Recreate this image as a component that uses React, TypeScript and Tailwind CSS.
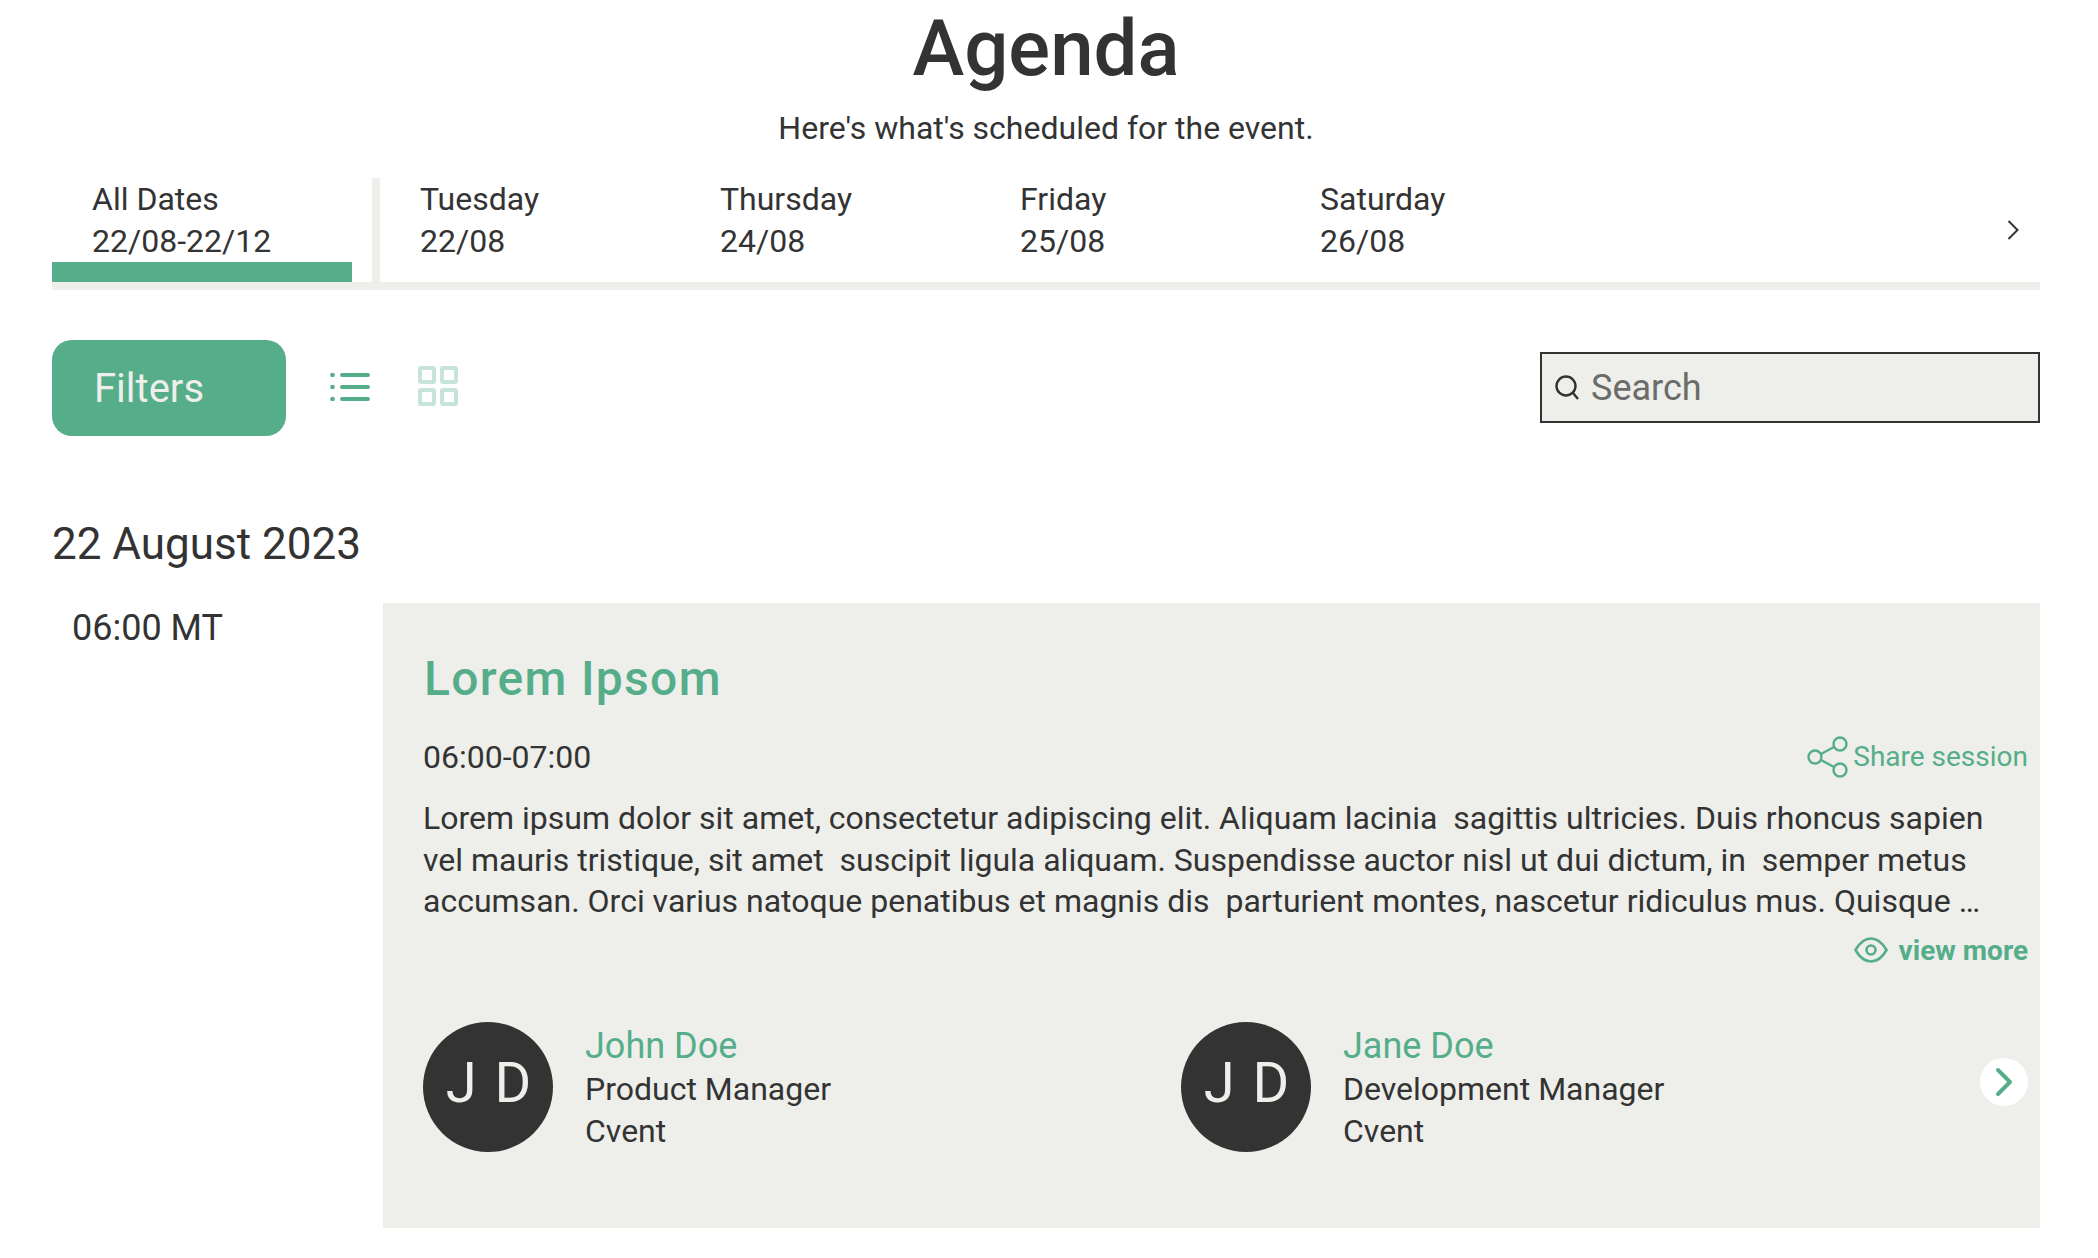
import React from 'react'
import { ChevronRight } from 'lucide-react'

const tabs = [
  { day: 'Tuesday', date: '22/08' },
  { day: 'Thursday', date: '24/08' },
  { day: 'Friday', date: '25/08' },
  { day: 'Saturday', date: '26/08' },
]

const speakers = [
  { name: 'John Doe', role: 'Product Manager', company: 'Cvent', width: 'w-[758px]' },
  { name: 'Jane Doe', role: 'Development Manager', company: 'Cvent', width: 'flex-1' },
]

const ListIcon = () => (
  <svg width="40" height="28" viewBox="0 0 40 28" fill="none" stroke="#56ad8a" strokeLinecap="round">
    <path d="M12 2h26M12 14h26M12 26h26" strokeWidth="4" />
    <circle cx="2.500" cy="2" r="2.300" fill="#56ad8a" stroke="none" />
    <circle cx="2.500" cy="14" r="2.300" fill="#56ad8a" stroke="none" />
    <circle cx="2.500" cy="26" r="2.300" fill="#56ad8a" stroke="none" />
  </svg>
)

const GridIcon = () => (
  <svg width="40" height="40" viewBox="0 0 40 40" fill="none" stroke="#c7e4d9" strokeWidth="4">
    <rect x="2" y="2" width="14" height="14" rx="1" />
    <rect x="24" y="2" width="14" height="14" rx="1" />
    <rect x="2" y="24" width="14" height="14" rx="1" />
    <rect x="24" y="24" width="14" height="14" rx="1" />
  </svg>
)

const ShareIcon = () => (
  <svg width="42" height="42" viewBox="0 0 42 42" fill="none" stroke="#56ad8a" strokeWidth="2.400">
    <circle cx="8" cy="21" r="6.500" />
    <circle cx="33" cy="8" r="6.500" />
    <circle cx="33" cy="34" r="6.500" />
    <path d="M14 18l13-7M14 24l13 7" />
  </svg>
)

const EyeIcon = () => (
  <svg width="34" height="26" viewBox="0 0 34 26" fill="none" stroke="#56ad8a" strokeWidth="2.600">
    <path d="M1.500 13C6 5 11 1.500 17 1.500S28 5 32.500 13C28 21 23 24.500 17 24.500S6 21 1.500 13Z" />
    <circle cx="17" cy="13" r="4.500" />
  </svg>
)

export default function App() {
  return (
    <div className="h-[1258px] w-[2098px] overflow-hidden bg-white pl-[52px] pr-[58px] font-['Roboto',sans-serif] text-[#333333]">
      <h1 className="text-center text-[78px] leading-[98px] font-medium">Agenda</h1>
      <p className="mt-[10px] text-center text-[32px] leading-[40px]">Here's what's scheduled for the event.</p>

      <div className="mt-[30px] box-content flex h-[104px] items-stretch border-b-[8px] border-[#eeefea]">
        <div className="w-[300px] border-b-[20px] border-[#56ad8a] pl-[40px] text-[32px] leading-[42px]">
          <div>All Dates</div>
          <div>22/08-22/12</div>
        </div>
        <div className="ml-[20px] w-[8px] bg-[#eeefea]" />
        {tabs.map((t) => (
          <div key={t.day} className="w-[300px] pl-[40px] text-[32px] leading-[42px]">
            <div>{t.day}</div>
            <div>{t.date}</div>
          </div>
        ))}
        <div className="ml-auto flex items-center pr-[20px]">
          <svg width="13" height="20" viewBox="0 0 13 20" fill="none" stroke="#333333" strokeWidth="2">
            <path d="M1.500 1l9 9-9 9" />
          </svg>
        </div>
      </div>

      <div className="mt-[50px] flex items-center">
        <button className="h-[96px] w-[234px] rounded-[20px] bg-[#56ad8a] pl-[42px] pt-[2px] text-left text-[40px] text-[#eeefea]">Filters</button>
        <div className="ml-[44px] mb-[2px]"><ListIcon /></div>
        <div className="ml-[48px] mb-[4px]"><GridIcon /></div>
        <div className="ml-auto mb-[2px] flex h-[71px] w-[500px] items-center gap-[11px] border-2 border-[#333333] bg-[#eeefea] pl-[12px]">
          <svg width="26" height="26" viewBox="0 0 26 26" fill="none" stroke="#333333" strokeWidth="2.400">
            <circle cx="12" cy="12" r="9.500" />
            <path d="M19 19l5 6" />
          </svg>
          <span className="pt-[2px] text-[36px] leading-none text-[#6b6b68]">Search</span>
        </div>
      </div>

      <h2 className="mt-[80px] text-[44px] leading-[56px]">22 August 2023</h2>

      <div className="mt-[31px] flex items-start">
        <div className="w-[331px] pl-[20px] pt-[3px] text-[36px] leading-[44px]">06:00 MT</div>
        <div className="h-[625px] flex-1 bg-[#eeefea] pl-[40px] pr-[12px] pt-[47px]">
          <h3 className="pl-[1px] text-[48px] leading-[58px] font-medium tracking-[1.300px] text-[#56ad8a]">Lorem Ipsom</h3>
          <div className="mt-[28px] flex items-center justify-between">
            <span className="text-[32px] leading-[40px]">06:00-07:00</span>
            <span className="flex items-center gap-[4px] text-[28px] leading-[40px] text-[#56ad8a]"><ShareIcon />Share session</span>
          </div>
          <p className="mt-[20px] max-w-[1590px] text-[32px] leading-[41.500px]">
            Lorem ipsum dolor sit amet, consectetur adipiscing elit. Aliquam lacinia{'\u00a0'} sagittis ultricies. Duis rhoncus sapien vel mauris tristique, sit amet{'\u00a0'} suscipit ligula aliquam. Suspendisse auctor nisl ut dui dictum, in{'\u00a0'} semper metus accumsan. Orci varius natoque penatibus et magnis dis{'\u00a0'} parturient montes, nascetur ridiculus mus. Quisque …
          </p>
          <div className="mt-[10px] flex items-center justify-end gap-[11px] text-[28px] leading-[36px] font-bold text-[#56ad8a]">
            <span className="mb-[2px]"><EyeIcon /></span>
            view more
          </div>
          <div className="mt-[53px] flex items-start">
            {speakers.map((s) => (
              <div key={s.name} className={`flex ${s.width}`}>
                <div className="flex h-[130px] w-[130px] shrink-0 items-center justify-center rounded-full bg-[#333333] pb-[7px] pl-[3px] text-[56px] tracking-[2px] text-[#eeefea]">J D</div>
                <div className="ml-[32px] pt-[2px] text-[32px] leading-[42px]">
                  <div className="text-[36px] leading-[44px] text-[#56ad8a]">{s.name}</div>
                  <div>{s.role}</div>
                  <div>{s.company}</div>
                </div>
              </div>
            ))}
            <div className="mt-[36px] flex h-[48px] w-[48px] shrink-0 items-center justify-center rounded-full bg-white">
              <ChevronRight size={48} strokeWidth={2} color="#56ad8a" className="shrink-0" />
            </div>
          </div>
        </div>
      </div>
    </div>
  )
}
